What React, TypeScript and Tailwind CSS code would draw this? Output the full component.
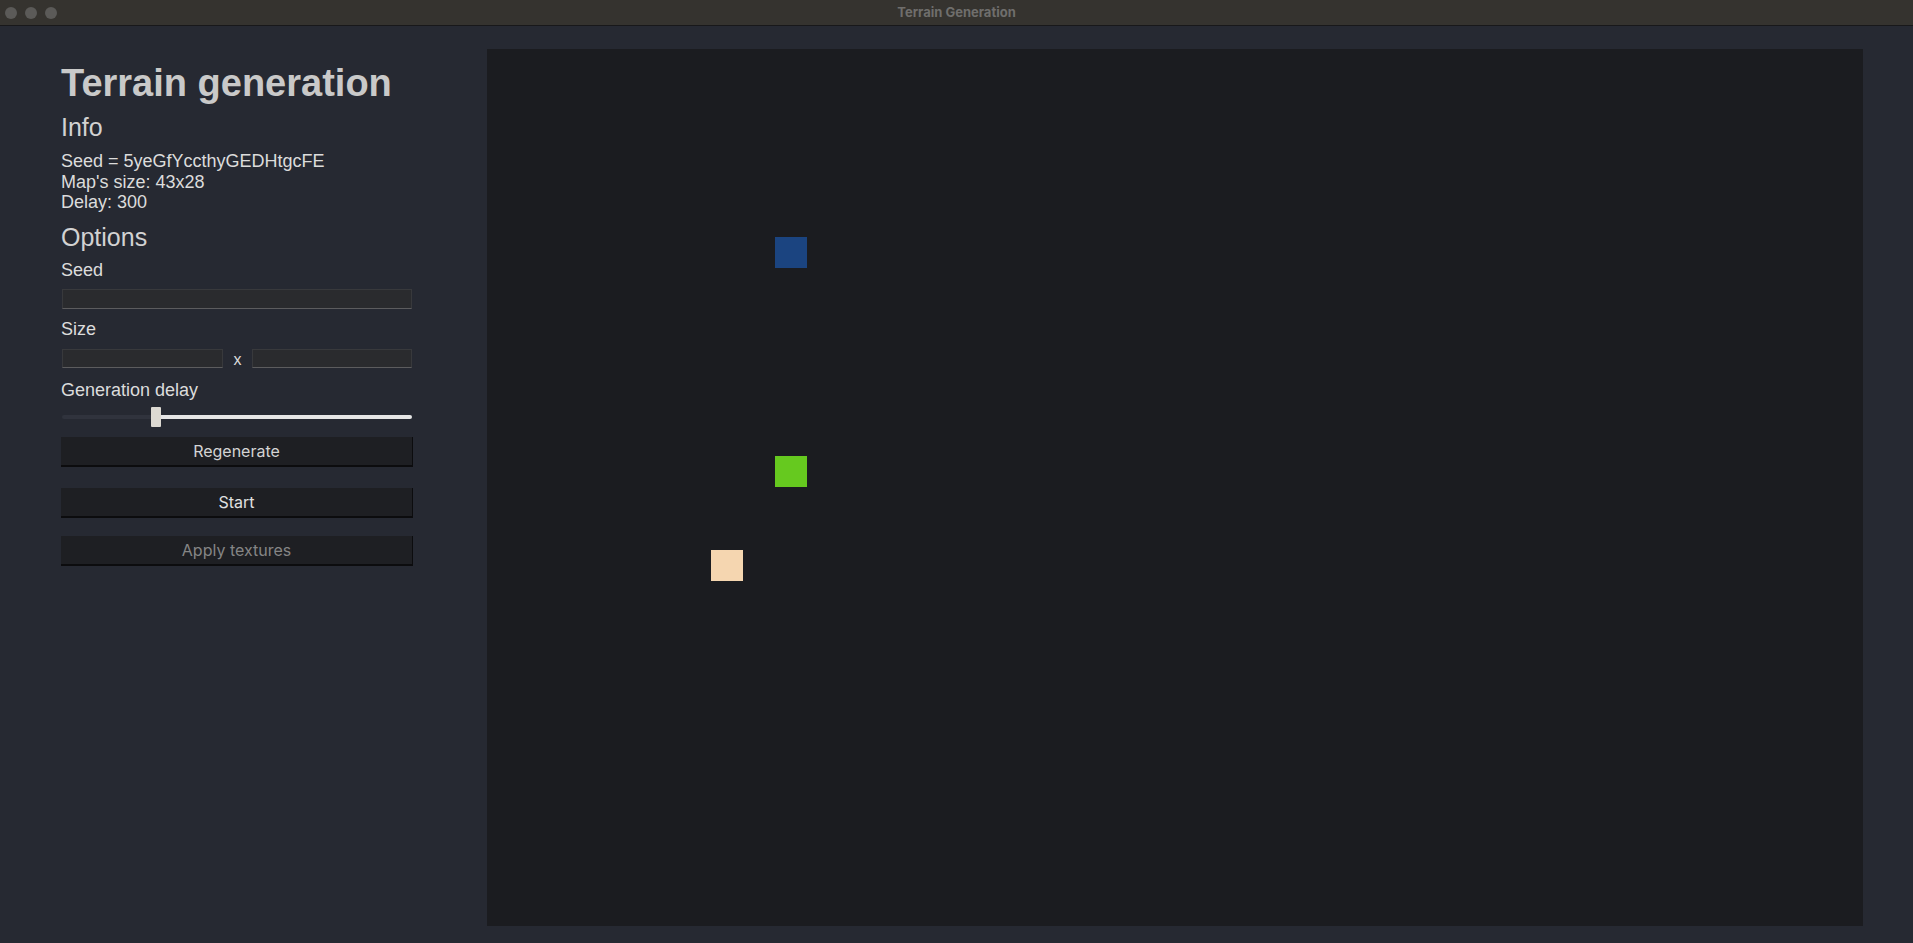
import React from "react";

const COLS = 43;
const ROWS = 28;
const cells: Record<string, string> = {
  "9,6": "#1b4480",
  "9,13": "#66c91f",
  "7,16": "#f5d6b0",
};

export default function App() {
  const grid = [];
  for (let r = 0; r < ROWS; r++) {
    for (let c = 0; c < COLS; c++) {
      const color = cells[`${c},${r}`];
      grid.push(
        <div key={`${c}-${r}`} style={color ? { backgroundColor: color } : undefined} />
      );
    }
  }

  return (
    <div className="w-[1913px] h-[943px] overflow-hidden flex flex-col bg-[#262932] font-['Liberation_Sans',Arial,sans-serif]">
      {/* title bar */}
      <div className="h-[26px] shrink-0 bg-[#35332f] border-b border-[#18181a] flex items-center relative">
        <div className="flex gap-[8px] pl-[5px]">
          <div className="w-[12px] h-[12px] rounded-full bg-[#5b5a58]" />
          <div className="w-[12px] h-[12px] rounded-full bg-[#5b5a58]" />
          <div className="w-[12px] h-[12px] rounded-full bg-[#5b5a58]" />
        </div>
        <div className="absolute inset-0 flex items-center justify-center text-[13px] font-bold text-[#6f6e6c] font-['Inter',sans-serif]">
          Terrain Generation
        </div>
      </div>

      {/* body */}
      <div className="flex-1 flex items-start">
        {/* left panel */}
        <div className="w-[352px] ml-[61px] mt-[36px] flex flex-col text-[#dcdcdc]">
          <h1 className="text-[38px] leading-[42px] font-bold text-[#c9c9c9]">Terrain generation</h1>
          <h2 className="text-[25px] leading-[28px] mt-[9px] text-[#d2d2d2]">Info</h2>
          <div className="text-[18px] leading-[20.5px] mt-[10px]">
            <div>Seed = 5yeGfYccthyGEDHtgcFE</div>
            <div>Map's size: 43x28</div>
            <div>Delay: 300</div>
          </div>
          <h2 className="text-[25px] leading-[28px] mt-[10px] text-[#d2d2d2]">Options</h2>
          <div className="text-[18px] leading-[20.5px] mt-[9px]">Seed</div>
          <div className="ml-[1px] mt-[9px] w-[350px] h-[20px] bg-[#2a2b2e] border border-[#38393c] border-b-[#5c5c5e]" />
          <div className="text-[18px] leading-[20.5px] mt-[10px]">Size</div>
          <div className="ml-[1px] mt-[9px] flex items-center h-[19px]">
            <div className="w-[161px] h-[19px] bg-[#2a2b2e] border border-[#38393c] border-b-[#5c5c5e]" />
            <div className="w-[29px] text-center text-[16px] leading-[19px] pt-[2px] text-[#dcdcdc]">x</div>
            <div className="w-[160px] h-[19px] bg-[#2a2b2e] border border-[#38393c] border-b-[#5c5c5e]" />
          </div>
          <div className="text-[18px] leading-[20.5px] mt-[12px]">Generation delay</div>
          <div className="ml-[1px] mt-[7px] w-[350px] h-[20px] flex items-center">
            <div className="w-[89px] h-[4px] bg-[#30333d] rounded-l-full" />
            <div className="w-[10px] h-[20px] bg-[#dcd9d2] rounded-[1px]" />
            <div className="flex-1 h-[4px] bg-[#e6e6e6] rounded-r-full" />
          </div>
          <div className="mt-[10px] flex flex-col font-['Inter',sans-serif] text-[16px]">
            <button className="h-[30px] w-[352px] bg-[#1e1f23] border-b-2 border-r border-[#0c0c0e] text-[#d4d4d4]">
              Regenerate
            </button>
            <button className="mt-[21px] h-[30px] w-[352px] bg-[#1e1f23] border-b-2 border-r border-[#0c0c0e] text-[#e0e0e0]">
              Start
            </button>
            <button className="mt-[18px] h-[30px] w-[352px] bg-[#1e1f23] border-b-2 border-r border-[#0c0c0e] text-[#858585]">
              Apply textures
            </button>
          </div>
        </div>

        {/* canvas */}
        <div className="ml-[74px] mt-[23px] w-[1376px] h-[877px] bg-[#1b1c20] grid grid-cols-[repeat(43,32px)] grid-rows-[repeat(28,1fr)]">
          {grid}
        </div>
      </div>
    </div>
  );
}
